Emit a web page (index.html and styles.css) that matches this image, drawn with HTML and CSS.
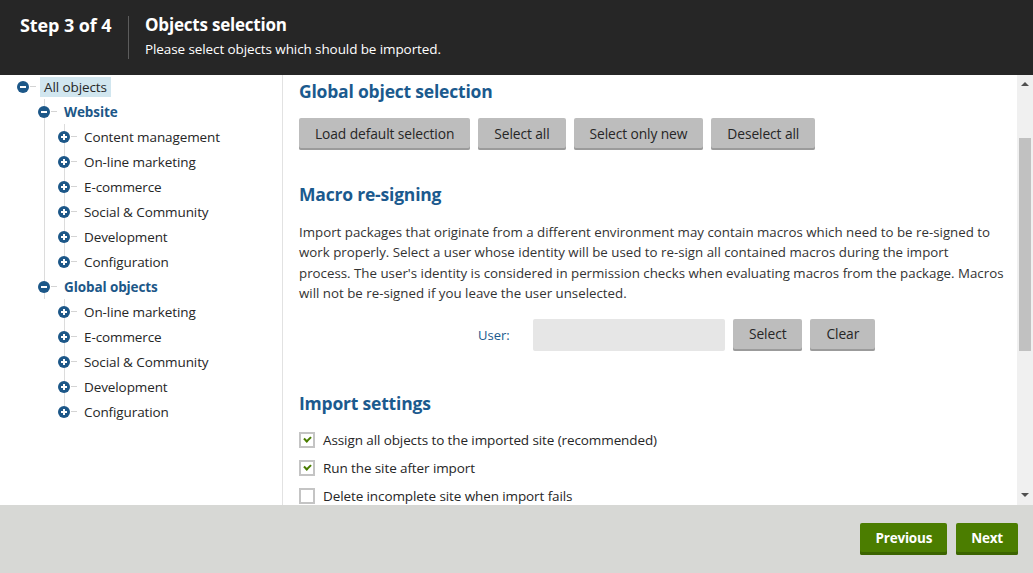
FILE: index.html
```html
<!DOCTYPE html>
<html>
<head>
<meta charset="utf-8">
<link rel="stylesheet" href="styles.css">
</head>
<body>
<div class="page">
  <header class="header">
    <div class="step">Step 3 of 4</div>
    <div class="divider"></div>
    <div class="titles">
      <div class="title">Objects selection</div>
      <div class="subtitle">Please select objects which should be imported.</div>
    </div>
  </header>
  <div class="main">
    <nav class="tree">
      <div class="node root">
        <div class="row"><span class="ico minus"></span><span class="dash"></span><span class="label sel">All objects</span></div>
        <div class="children lvl1">
          <div class="node">
            <div class="row"><span class="ico minus"></span><span class="dash"></span><span class="label grp">Website</span></div>
            <div class="children lvl2">
              <div class="row"><span class="ico plus"></span><span class="dash"></span><span class="label">Content management</span></div>
              <div class="row"><span class="ico plus"></span><span class="dash"></span><span class="label">On-line marketing</span></div>
              <div class="row"><span class="ico plus"></span><span class="dash"></span><span class="label">E-commerce</span></div>
              <div class="row"><span class="ico plus"></span><span class="dash"></span><span class="label">Social &amp; Community</span></div>
              <div class="row"><span class="ico plus"></span><span class="dash"></span><span class="label">Development</span></div>
              <div class="row"><span class="ico plus"></span><span class="dash"></span><span class="label">Configuration</span></div>
            </div>
          </div>
          <div class="node">
            <div class="row"><span class="ico minus"></span><span class="dash"></span><span class="label grp">Global objects</span></div>
            <div class="children lvl2">
              <div class="row"><span class="ico plus"></span><span class="dash"></span><span class="label">On-line marketing</span></div>
              <div class="row"><span class="ico plus"></span><span class="dash"></span><span class="label">E-commerce</span></div>
              <div class="row"><span class="ico plus"></span><span class="dash"></span><span class="label">Social &amp; Community</span></div>
              <div class="row"><span class="ico plus"></span><span class="dash"></span><span class="label">Development</span></div>
              <div class="row"><span class="ico plus"></span><span class="dash"></span><span class="label">Configuration</span></div>
            </div>
          </div>
        </div>
      </div>
    </nav>
    <section class="content">
      <h2 class="h">Global object selection</h2>
      <div class="btns">
        <button class="btn">Load default selection</button>
        <button class="btn">Select all</button>
        <button class="btn">Select only new</button>
        <button class="btn">Deselect all</button>
      </div>
      <h2 class="h h2">Macro re-signing</h2>
      <p class="para">Import packages that originate from a different environment may contain macros which need to be re-signed to work properly. Select a user whose identity will be used to re-sign all contained macros during the import<br>process. The user's identity is considered in permission checks when evaluating macros from the package. Macros<br>will not be re-signed if you leave the user unselected.</p>
      <div class="userrow">
        <span class="ulabel">User:</span>
        <div class="uinput"></div>
        <button class="btn">Select</button>
        <button class="btn">Clear</button>
      </div>
      <h2 class="h h3">Import settings</h2>
      <div class="checks">
        <label class="chk"><span class="box on"></span>Assign all objects to the imported site (recommended)</label>
        <label class="chk"><span class="box on"></span>Run the site after import</label>
        <label class="chk"><span class="box"></span>Delete incomplete site when import fails</label>
      </div>
    </section>
    <div class="scrollbar">
      <span class="arr up"></span>
      <div class="track"><div class="thumb"></div></div>
      <span class="arr down"></span>
    </div>
  </div>
  <footer class="footer">
    <button class="gbtn">Previous</button>
    <button class="gbtn">Next</button>
  </footer>
</div>
</body>
</html>
```
FILE: styles.css
```css
* { box-sizing: border-box; }
html, body { margin: 0; padding: 0; }
body {
  font-family: "Open Sans", "Noto Sans", sans-serif;
  font-size: 13px;
  color: #262626;
  background: #fff;
}
.page {
  width: 1033px;
  height: 573px;
  display: flex;
  flex-direction: column;
  overflow: hidden;
}
.header {
  height: 75px;
  background: #262626;
  color: #fff;
  display: flex;
  align-items: flex-start;
  padding: 13px 0 0 20px;
  flex: none;
}
.step {
  font-size: 18px;
  font-weight: 700;
  width: 92px;
  line-height: 24px;
  letter-spacing: -0.1px;
  white-space: nowrap;
}
.divider {
  width: 1px;
  height: 43px;
  background: #5c5c5c;
  margin: 3px 16px 0 16px;
}
.titles { display: flex; flex-direction: column; }
.title {
  font-size: 17px;
  font-weight: 700;
  line-height: 24px;
  letter-spacing: -0.2px;
}
.subtitle {
  font-size: 13.5px;
  line-height: 18px;
  margin-top: 3px;
  letter-spacing: -0.1px;
}
.main {
  flex: 1;
  display: flex;
  min-height: 0;
}
.tree {
  width: 283px;
  flex: none;
  border-right: 1px solid #e2e2e2;
  padding: 0 0 0 17px;
  font-size: 13.5px;
}
.root { margin-top: -1px; }
.row {
  display: flex;
  align-items: center;
  height: 25px;
  position: relative;
}
.ico {
  width: 12px;
  height: 12px;
  border-radius: 50%;
  background: #1c5788;
  position: relative;
  flex: none;
}
.ico::before {
  content: "";
  position: absolute;
  left: 3px;
  top: 5px;
  width: 6px;
  height: 2px;
  background: #fff;
}
.plus::after {
  content: "";
  position: absolute;
  left: 5px;
  top: 3px;
  width: 2px;
  height: 6px;
  background: #fff;
}
.dash {
  width: 6px;
  height: 1px;
  background: #d4d4d4;
  margin: 0 7px 0 1px;
  flex: none;
}
.label { letter-spacing: -0.1px; }
.label.sel {
  background: #d1e6ef;
  padding: 0 4px;
  margin-left: -3px;
  line-height: 20px;
}
.label.grp {
  font-weight: 700;
  color: #1c5788;
}
.children {
  position: relative;
}
.lvl1 { padding-left: 21px; }
.lvl1::before {
  content: "";
  position: absolute;
  left: 27px;
  top: 0;
  height: 200px;
  width: 1px;
  background: #dcdcdc;
}
.lvl2 { padding-left: 20px; position: relative; }
.lvl2::before {
  content: "";
  position: absolute;
  left: 26px;
  top: 0;
  bottom: 12px;
  width: 1px;
  background: #dcdcdc;
}
.content {
  flex: 1;
  padding: 4px 10px 0 16px;
  overflow: hidden;
  min-width: 0;
}
.h {
  margin: 0;
  font-size: 17.5px;
  font-weight: 700;
  color: #1b5a8e;
  line-height: 24px;
  letter-spacing: -0.2px;
}
.btns {
  display: flex;
  gap: 8px;
  margin-top: 15px;
}
.btn {
  font-family: inherit;
  font-size: 13.8px;
  color: #262626;
  background: #bdbdbd;
  border: none;
  border-radius: 2px;
  box-shadow: inset 0 -2px 0 #9b9b9b;
  height: 32px;
  padding: 0 16px 2px 16px;
  letter-spacing: -0.1px;
}
.h2 { margin-top: 32px; }
.para {
  margin: 16px 0 0 0;
  font-size: 13.3px;
  line-height: 20.4px;
  color: #333;
}
.userrow {
  display: flex;
  align-items: center;
  gap: 8px;
  margin-top: 15px;
  padding-left: 179px;
}
.ulabel {
  color: #1b5a8e;
  width: 47px;
  font-size: 13px;
}
.uinput {
  width: 192px;
  height: 32px;
  background: #e6e6e6;
  border-radius: 2px;
}
.h3 { margin-top: 40px; }
.checks {
  display: flex;
  flex-direction: column;
  gap: 9px;
  margin-top: 16px;
}
.chk {
  display: flex;
  align-items: center;
  height: 19px;
  font-size: 13.5px;
  letter-spacing: -0.1px;
}
.box {
  width: 16px;
  height: 16px;
  border: 2px solid #c4c4c4;
  background: #fff;
  margin-right: 8px;
  position: relative;
  flex: none;
}
.box.on::after {
  content: "";
  position: absolute;
  left: 3px;
  top: 2px;
  width: 5px;
  height: 3px;
  border-left: 2px solid #4a7d00;
  border-bottom: 2px solid #4a7d00;
  transform: rotate(-45deg);
}
.scrollbar {
  width: 16px;
  flex: none;
  background: #f0f0f0;
  display: flex;
  flex-direction: column;
  align-items: center;
}
.arr {
  width: 0;
  height: 0;
  border-left: 4px solid transparent;
  border-right: 4px solid transparent;
  flex: none;
}
.arr.up { border-bottom: 4px solid #505050; margin-top: 7px; }
.arr.down { border-top: 4px solid #505050; margin-bottom: 8px; }
.track { flex: 1; width: 100%; padding: 0 2px; }
.thumb {
  margin-top: 52px;
  height: 213px;
  background: #c1c1c1;
}
.footer {
  height: 68px;
  flex: none;
  background: #d7d8d5;
  display: flex;
  justify-content: flex-end;
  align-items: flex-start;
  gap: 9px;
  padding: 18px 15px 0 0;
}
.gbtn {
  font-family: inherit;
  font-size: 13.5px;
  font-weight: 700;
  color: #fff;
  background: #4b7d00;
  border: none;
  border-radius: 2px;
  box-shadow: inset 0 -3px 0 #3b6400;
  height: 32px;
  padding: 0 15px 2px 15px;
  letter-spacing: -0.2px;
}
```
